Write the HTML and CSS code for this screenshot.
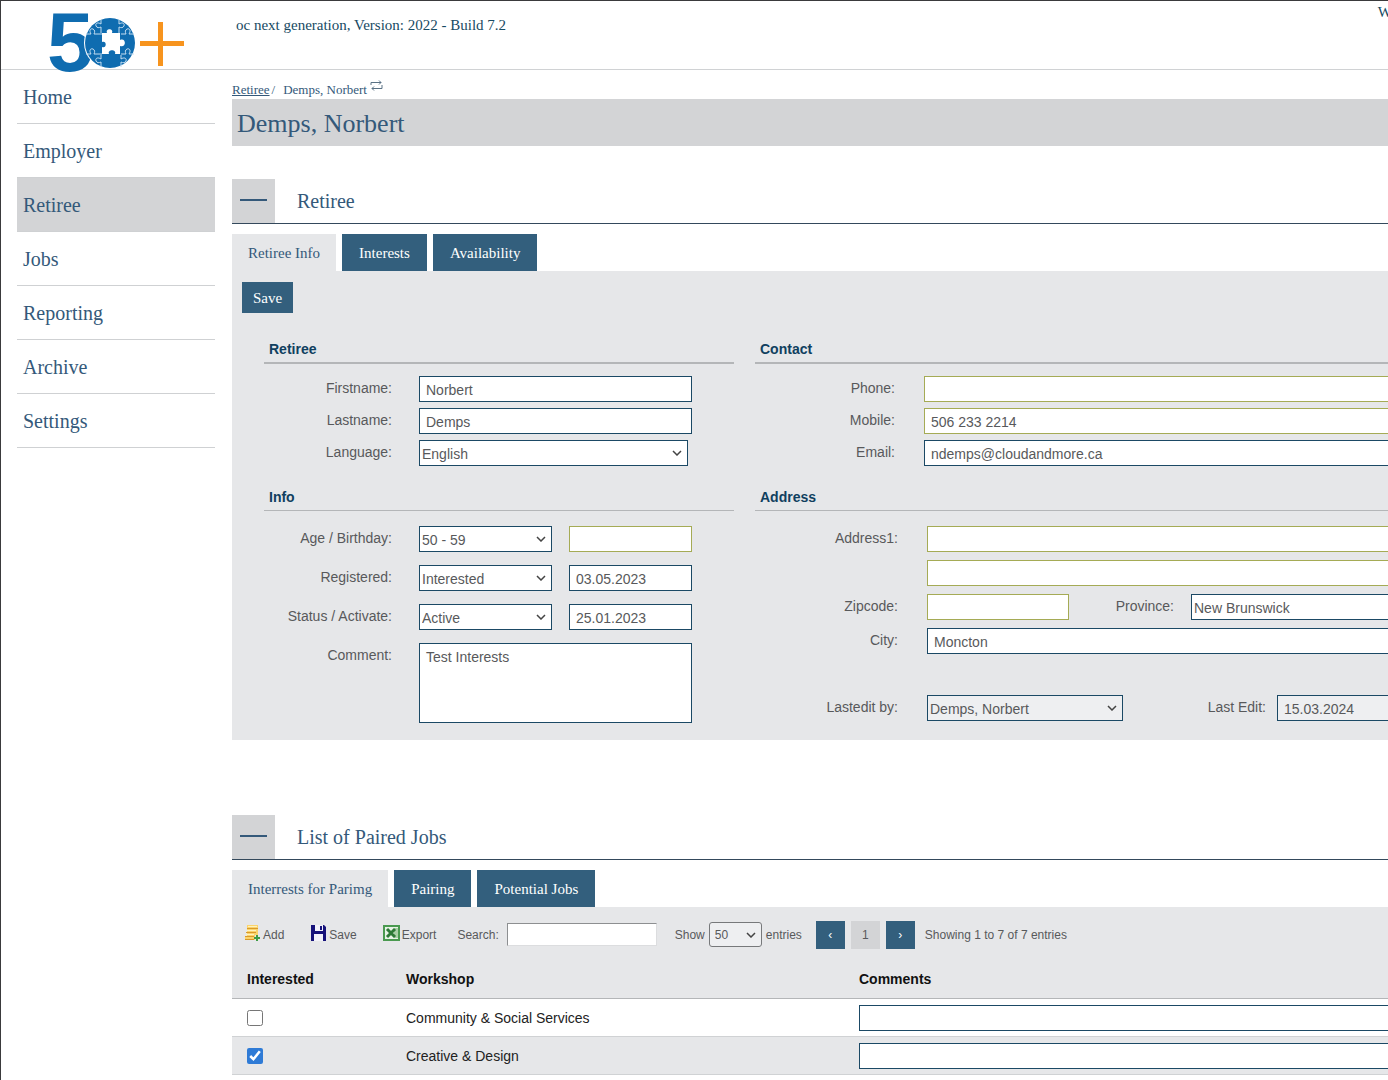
FILE: index.html
```html
<!DOCTYPE html>
<html lang="en">
<head>
  <meta charset="UTF-8">
  <meta name="viewport" content="width=device-width, initial-scale=1">
  <title>Demps, Norbert</title>
  <link rel="stylesheet" href="styles.css">
</head>
<body>
<div class="page">
  <header class="header">
    <svg class="logo" width="142" height="80" viewBox="0 0 142 80" role="img" aria-label="50+">
      <text class="logo-digit" x="-1" y="61">5</text>
      <circle cx="62" cy="33" r="26" fill="#fff"/>
      <circle cx="62" cy="33" r="25" fill="#0f6cb0"/>
      <path fill="none" stroke="#c3dcf0" stroke-width="1" d="M53 10v4c-3-2-6-1-5 2 1 2 3 2 5 1v6M71 10v4c3-2 6-1 5 2-1 2-3 2-5 1v6M53 45v4c-3-2-6-1-5 2 1 2 3 2 5 1v5M73 45v4c3-2 6-1 5 2-1 2-3 2-5 1v5M38 24h5c-2-3-1-6 2-5 2 1 2 3 1 5h8M86 24h-5c2-3 1-6-2-5-2 1-2 3-1 5h-5M38 44h5c-2-3-1-6 2-5 2 1 2 3 1 5h8M86 44h-5c2-3 1-6-2-5-2 1-2 3-1 5h-5"/>
      <path fill="#fff" d="M54 23h5c-2-5 7-5 5 0h8v7c6-3 7 8 0 6v8h-5c2-5-8-5-6 0h-7v-7c5 2 5-7 0-5z"/>
      <path fill="#f7941e" d="M92 31h18V12h5v19h21v5h-21v20h-5V36H92z"/>
    </svg>
    <div class="version">oc next generation, Version: 2022 - Build 7.2</div>
    <div class="user">W</div>
  </header>

  <div class="layout">
    <nav class="sidebar">
      <a href="#">Home</a>
      <a href="#">Employer</a>
      <a href="#" class="active">Retiree</a>
      <a href="#">Jobs</a>
      <a href="#">Reporting</a>
      <a href="#">Archive</a>
      <a href="#">Settings</a>
    </nav>

    <main class="main">
      <div class="breadcrumb">
        <a href="#">Retiree</a><span>/</span><span class="crumb">Demps, Norbert</span>
        <svg width="13" height="12" viewBox="0 0 13 12" fill="none" stroke="#5a7285"><path d="M1 5V2.500h10M9 .5l2 2-2 2M12 5v3.500H2M4 6.500l-2 2 2 2"/></svg>
      </div>
      <h1>Demps, Norbert</h1>

      <section class="section">
        <div class="section-head">
          <button class="collapse" aria-label="Collapse"></button>
          <h2>Retiree</h2>
        </div>
        <div class="tabs">
          <button class="tab active">Retiree Info</button>
          <button class="tab">Interests</button>
          <button class="tab">Availability</button>
        </div>
        <div class="panel">
          <button class="save">Save</button>
          <form class="form">
            <div class="group">
              <h3>Retiree</h3>
              <div class="fields">
                <label for="firstname">Firstname:</label>
                <input id="firstname" type="text" value="Norbert">
                <label for="lastname">Lastname:</label>
                <input id="lastname" type="text" value="Demps">
                <label for="language">Language:</label>
                <select id="language" class="language"><option>English</option></select>
              </div>
            </div>

            <div class="group contact">
              <h3>Contact</h3>
              <div class="fields">
                <label for="phone">Phone:</label>
                <input id="phone" class="optional" type="text">
                <label for="mobile">Mobile:</label>
                <input id="mobile" class="optional" type="text" value="506 233 2214">
                <label for="email">Email:</label>
                <input id="email" type="text" value="ndemps@cloudandmore.ca">
              </div>
            </div>

            <div class="group info">
              <h3>Info</h3>
              <div class="fields">
                <label for="age">Age / Birthday:</label>
                <div class="pair">
                  <select id="age"><option>50 - 59</option></select>
                  <input class="optional" type="text" aria-label="Birthday">
                </div>
                <label for="registered">Registered:</label>
                <div class="pair">
                  <select id="registered"><option>Interested</option></select>
                  <input type="text" value="03.05.2023" aria-label="Registered date">
                </div>
                <label for="status">Status / Activate:</label>
                <div class="pair">
                  <select id="status"><option>Active</option></select>
                  <input type="text" value="25.01.2023" aria-label="Activate date">
                </div>
                <label for="comment">Comment:</label>
                <textarea id="comment">Test Interests</textarea>
              </div>
            </div>

            <div class="group address">
              <h3>Address</h3>
              <div class="fields">
                <label for="address1">Address1:</label>
                <input id="address1" class="optional" type="text">
                <input class="optional second-line" type="text" aria-label="Address2">
                <label for="zipcode">Zipcode:</label>
                <div class="line">
                  <input id="zipcode" class="optional zip" type="text">
                  <label for="province" class="province-label">Province:</label>
                  <select id="province" class="grow"><option>New Brunswick</option></select>
                </div>
                <label for="city">City:</label>
                <input id="city" type="text" value="Moncton">
              </div>
              <div class="fields lastedit">
                <label for="editor">Lastedit by:</label>
                <div class="line">
                  <select id="editor" class="editor readonly"><option>Demps, Norbert</option></select>
                  <label for="editdate" class="editdate-label">Last Edit:</label>
                  <input id="editdate" class="grow readonly" type="text" value="15.03.2024" readonly>
                </div>
              </div>
            </div>
          </form>
        </div>
      </section>

      <section class="section">
        <div class="section-head">
          <button class="collapse" aria-label="Collapse"></button>
          <h2>List of Paired Jobs</h2>
        </div>
        <div class="tabs">
          <button class="tab active">Interrests for Parimg</button>
          <button class="tab">Pairing</button>
          <button class="tab">Potential Jobs</button>
        </div>
        <div class="panel list">
          <div class="toolbar">
            <div class="actions">
              <button class="action">
                <svg width="17" height="18" viewBox="0 0 17 18"><path fill="#fbd46b" d="M3 1h11v10h-3v5H1v-4h2z"/><path stroke="#d99a2b" d="M3 4.500h11M2 8.500h10M1 12.500h9M1 15.500h9"/><path stroke="#fff2bd" d="M4 2.500h9M3 6.500h9M2 10.500h8"/><path stroke="#3e9b46" stroke-width="2" d="M13 11v6M10 14h6"/></svg>
                Add
              </button>
              <button class="action">
                <svg width="17" height="18" viewBox="0 0 17 18"><path fill="#16127a" d="M1 1h13l2 2v14H1z"/><path fill="#f2f2fa" d="M5 1h8v6H5zM4 10h9v7H4z"/><path fill="#16127a" d="M10 2h2v4h-2z"/></svg>
                Save
              </button>
              <button class="action">
                <svg width="17" height="18" viewBox="0 0 17 18"><path fill="#4a9a50" d="M0 1h17v16H0z"/><path fill="#e8f3e6" d="M2 3h13v12H2z"/><path fill="#a9cfa6" d="M11 4h4v10h-4z"/><path stroke="#2e7a37" stroke-width="3" d="M4 5l8 8M12 5l-8 8"/></svg>
                Export
              </button>
            </div>
            <label for="search">Search:</label>
            <input id="search" class="search" type="text">
            <label for="show">Show</label>
            <select id="show" class="show"><option>50</option></select>
            <span>entries</span>
            <div class="pager">
              <button>‹</button>
              <button class="current">1</button>
              <button>›</button>
            </div>
            <span>Showing 1 to 7 of 7 entries</span>
          </div>
          <table class="jobs">
            <thead>
              <tr><th class="col-check">Interested</th><th class="col-workshop">Workshop</th><th>Comments</th></tr>
            </thead>
            <tbody>
              <tr>
                <td><input class="check" type="checkbox" aria-label="Community &amp; Social Services"></td>
                <td>Community &amp; Social Services</td>
                <td><input type="text" aria-label="Comment on Community &amp; Social Services"></td>
              </tr>
              <tr>
                <td><input class="check" type="checkbox" checked aria-label="Creative &amp; Design"></td>
                <td>Creative &amp; Design</td>
                <td><input type="text" aria-label="Comment on Creative &amp; Design"></td>
              </tr>
            </tbody>
          </table>
        </div>
      </section>
    </main>
  </div>
</div>
</body>
</html>
```
FILE: styles.css
```css
* {
  box-sizing: border-box;
}

body {
  margin: 0;
  font-family: "Liberation Serif", "Times New Roman", serif;
  color: #34597a;
  background: #fff;
}

.page {
  min-height: 100vh;
  border-top: 1px solid #3a3a3c;
  border-left: 1px solid #3a3a3c;
  overflow: hidden;
}

button, input, select, textarea {
  font: inherit;
  color: inherit;
  margin: 0;
  border-radius: 0;
}

button {
  border: 0;
  cursor: pointer;
}

/* header */
.header {
  display: flex;
  height: 69px;
  border-bottom: 1px solid #d0d2d4;
  padding-left: 47px;
}

.logo {
  flex: none;
  margin-top: 9px;
  overflow: visible;
}

.logo-digit {
  font: bold 84px "Liberation Sans", Arial, sans-serif;
  fill: #0f6cb0;
}

.version {
  margin-left: 46px;
  padding-top: 15px;
  font-size: 15px;
  line-height: 18px;
  color: #174a63;
}

.user {
  margin-left: auto;
  margin-right: -4px;
  padding-top: 2px;
  font-size: 15px;
  line-height: 18px;
  color: #174a63;
}

/* navigation */
.layout {
  display: flex;
  gap: 17px;
  padding-left: 16px;
}

.sidebar {
  flex: none;
  width: 198px;
}

.sidebar a {
  display: block;
  height: 54px;
  padding-left: 6px;
  border-bottom: 1px solid #cfd1d3;
  font-size: 20px;
  line-height: 54px;
  color: #34597a;
  text-decoration: none;
}

.sidebar a.active {
  background: #d3d4d6;
}

/* content runs past the right edge of the window */
.main {
  flex: 1;
  min-width: 0;
  margin-right: -20px;
}

.breadcrumb {
  display: flex;
  padding-top: 10px;
  font-size: 13px;
  line-height: 19px;
}

.breadcrumb a {
  color: inherit;
  margin-right: 2px;
}

.breadcrumb .crumb {
  margin: 0 3px 0 8px;
}

h1 {
  margin: 0 0 33px;
  padding: 2px 0 0 5px;
  background: #d3d4d6;
  font-size: 26px;
  font-weight: normal;
  line-height: 45px;
}

.section {
  margin-bottom: 75px;
}

.section:last-child {
  margin-bottom: 0;
}

.section-head {
  display: flex;
  gap: 22px;
  margin-bottom: 10px;
  border-bottom: 1px solid #34495c;
}

.collapse {
  width: 43px;
  height: 44px;
  padding: 0 8px 2px;
  background: #d3d4d6;
}

.collapse::before {
  content: "";
  display: block;
  height: 2px;
  background: #34597a;
}

h2 {
  margin: 0;
  font-size: 20px;
  font-weight: normal;
  line-height: 44px;
}

.tabs {
  display: flex;
  gap: 6px;
}

.tab {
  height: 37px;
  padding: 2px 17px 0;
  background: #335f7d;
  color: #fff;
  font-size: 15px;
}

.tab.active {
  padding: 2px 16px 0;
  background: #e6e7e9;
  color: #34597a;
}

.panel {
  padding: 11px 0 17px 10px;
  background: #e6e7e9;
  font-family: "Liberation Sans", Arial, sans-serif;
  font-size: 14px;
  color: #58595b;
}

.save {
  display: block;
  height: 31px;
  padding: 2px 11px 0;
  background: #335f7d;
  color: #fff;
  font-family: "Liberation Serif", "Times New Roman", serif;
  font-size: 15px;
}

/* form */
.form {
  display: grid;
  grid-template-columns: minmax(0, 470px) minmax(0, 1fr);
  gap: 18px 21px;
  padding: 24px 0 0 22px;
}

h3 {
  margin: 0 0 12px;
  padding-left: 5px;
  border-bottom: 2px solid #b4b6b8;
  font-size: 14px;
  line-height: 25px;
  color: #10405f;
}

.fields {
  display: grid;
  grid-template-columns: 155px minmax(0, 273px);
  gap: 6px 0;
}

.fields label {
  line-height: 24px;
  text-align: right;
  padding-right: 27px;
}

.contact .fields {
  grid-template-columns: 169px minmax(0, 1fr);
}

.contact .fields > label,
.address .fields > label {
  padding-right: 29px;
}

.address .fields {
  grid-template-columns: 172px minmax(0, 1fr);
  row-gap: 8px;
}

.info .fields {
  row-gap: 13px;
}

.info h3,
.address h3 {
  margin-bottom: 15px;
  border-bottom-width: 1px;
  line-height: 26px;
}

.panel input,
.panel select,
.panel textarea {
  width: 100%;
  height: 26px;
  padding: 2px 6px 0;
  border: 1px solid #1b4965;
  background-color: #fff;
}

.panel select {
  appearance: none;
  padding: 2px 2px 0;
  background-image: url("data:image/svg+xml,%3Csvg xmlns='http://www.w3.org/2000/svg' width='10' height='6' fill='none' stroke='%23444' stroke-width='1.500'%3E%3Cpath d='M1 1l4 4 4-4'/%3E%3C/svg%3E");
  background-repeat: no-repeat;
  background-position: right 5px center;
}

.panel .optional {
  border-color: #a5ab55;
}

.panel textarea {
  height: 80px;
  padding: 5px 6px 0;
  resize: none;
}

.panel .language {
  width: 269px;
}

.pair {
  display: grid;
  grid-template-columns: 133px 1fr;
  gap: 17px;
}

.second-line {
  grid-column: 2;
}

.line {
  display: flex;
}

.panel .zip {
  width: 142px;
}

.fields .province-label {
  width: 122px;
  padding-right: 17px;
}

.panel .editor {
  width: 196px;
}

.fields .editdate-label {
  width: 154px;
  padding-right: 11px;
}

.line .grow {
  flex: 1;
  min-width: 0;
}

.panel .readonly {
  background-color: #eeeff1;
}

.lastedit {
  margin-top: 41px;
}

/* list of jobs */
.list {
  padding: 0;
}

.toolbar {
  display: flex;
  align-items: center;
  height: 53px;
  padding: 2px 0 0 12px;
  font-size: 12px;
  white-space: nowrap;
}

.actions {
  display: flex;
  gap: 26px;
  margin-right: 21px;
}

.action {
  display: flex;
  align-items: flex-end;
  gap: 2px;
  padding: 0 0 4px;
  background: none;
}

.panel .search {
  width: 150px;
  height: 23px;
  margin: 0 18px 0 8px;
  border-color: #8d8f91 #dcdddf #dcdddf #8d8f91;
}

.panel .show {
  width: 53px;
  height: 25px;
  margin: 0 4px;
  padding: 0 5px;
  border-color: #77797b;
  border-radius: 3px;
  background-color: #eeeff1;
}

.pager {
  display: flex;
  gap: 6px;
  margin: 0 10px 0 14px;
}

.pager button {
  width: 29px;
  height: 28px;
  padding: 0;
  background: #335f7d;
  color: #fff;
}

.pager .current {
  background: #d3d4d6;
  color: #58595b;
}

.jobs {
  width: 100%;
  border-collapse: collapse;
  table-layout: fixed;
  color: #222;
}

.jobs th,
.jobs td {
  height: 38px;
  padding: 0 0 0 15px;
  border-bottom: 1px solid #d0d2d4;
  text-align: left;
}

.jobs th {
  border-color: #b4b6b8;
  color: #111;
}

.jobs td {
  padding-top: 2px;
}

.jobs .col-check {
  width: 159px;
}

.jobs .col-workshop {
  width: 453px;
}

.jobs tbody tr:nth-child(odd) {
  background: #fff;
}

.jobs input {
  display: block;
}

.jobs .check {
  width: 16px;
  height: 16px;
  accent-color: #2f7bd6;
}
```
